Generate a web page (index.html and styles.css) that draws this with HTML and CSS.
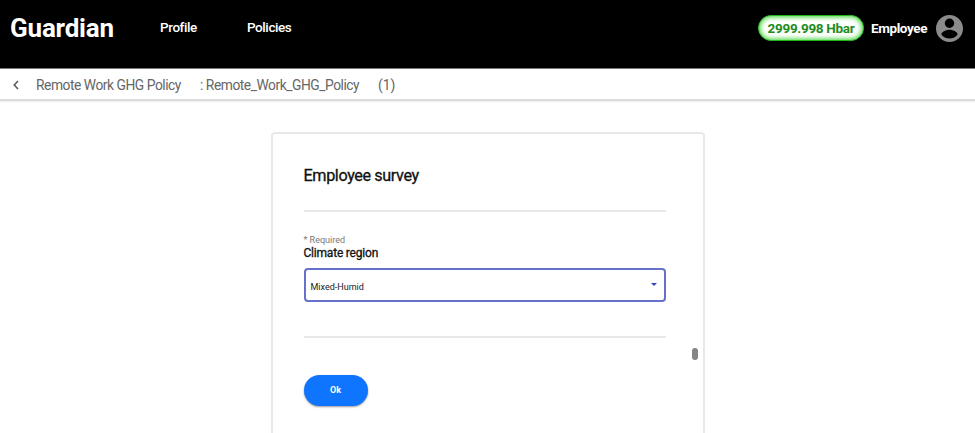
FILE: index.html
```html
<!DOCTYPE html>
<html lang="en">
<head>
<meta charset="utf-8">
<title>Guardian</title>
<link rel="stylesheet" href="styles.css">
</head>
<body>
<header class="topbar">
  <div class="brand"><span>Guardian</span></div>
  <nav class="nav"><a class="profile">Profile</a><a class="policies">Policies</a></nav>
  <div class="account">
    <span class="balance"><span>2999.998 Hbar</span></span>
    <span class="role">Employee</span>
    <svg class="avatar" viewBox="2 2 20 20"><path fill="#8b8b8b" d="M12 2a10 10 0 1 0 0 20 10 10 0 0 0 0-20zm0 2.600a3.500 3.500 0 1 1 0 7 3.500 3.500 0 0 1 0-7zm0 14.800c-2.500 0-4.700-1.100-6-3 0-2 4-3.400 6-3.400s6 1.400 6 3.400c-1.300 1.900-3.500 3-6 3z"/></svg>
  </div>
</header>
<div class="crumbs">
  <svg class="back" viewBox="0 0 6 10"><path d="M5 1 1.200 5 5 9" fill="none" stroke="#555" stroke-width="1.500"/></svg>
  <span class="policy">Remote Work GHG Policy</span>
  <span class="tag">: Remote_Work_GHG_Policy</span>
  <span class="version">(1)</span>
</div>
<main class="page">
  <section class="card">
    <h1 class="title"><span>Employee survey</span></h1>
    <div class="field">
      <div class="required"><span>* Required</span></div>
      <label class="label"><span>Climate region</span></label>
      <div class="select"><span class="value">Mixed-Humid</span><svg class="caret" viewBox="0 0 6 3"><path d="M0 0h6L3 3z" fill="#3446b8"/></svg></div>
    </div>
    <div class="actions"><button class="ok">Ok</button></div>
    <div class="thumb"></div>
  </section>
</main>
</body>
</html>
```
FILE: styles.css
```css
* { box-sizing: border-box; }
html, body { height: 100%; }
body { margin: 0; display: flex; flex-direction: column; overflow: hidden; background: #fff; color: #111; font-family: Roboto, sans-serif; white-space: nowrap; }
.topbar { height: 68px; flex: none; display: flex; align-items: flex-start; background: #000; color: #fff; padding: 12px 12px 0 10px; }
.brand { width: 150px; font-size: 26px; font-weight: 700; line-height: 32px; letter-spacing: -0.2px; }
.nav { display: flex; font-size: 13.5px; font-weight: 500; line-height: 31px; letter-spacing: -0.42px; }
.profile { width: 87px; }
.account { margin-left: auto; display: flex; align-items: center; height: 32px; }
.balance { width: 106px; height: 26px; border: 1px solid #22b61a; border-radius: 13px; background: #fff; color: #218c1d; box-shadow: inset 0 0 5px 1px #36d32c; font-size: 13.5px; font-weight: 700; line-height: 24px; letter-spacing: -0.3px; text-align: center; }
.role { width: 65px; margin-left: 7px; font-size: 13.5px; font-weight: 700; letter-spacing: -0.4px; }
.avatar { width: 27px; height: 27px; }
.crumbs { height: 33px; flex: none; display: flex; align-items: center; padding: 2px 0 0 13px; border-top: 1px solid #777; border-bottom: 2px solid #dcdcdc; box-shadow: 0 1px 1px #eee; color: #666; font-size: 13.8px; line-height: 28px; letter-spacing: -0.46px; }
.back { width: 6px; height: 10px; margin-right: 17px; }
.policy { width: 164px; }
.tag { width: 178px; }
.version { letter-spacing: 0; }
.page { flex: 1; display: flex; justify-content: center; padding-top: 31px; min-height: 0; }
.card { position: relative; width: 434px; height: 320px; flex: none; border: 2px solid #e8e8e8; border-radius: 4px; padding: 30px 37px 0 31px; }
.title { margin: 0; height: 48px; border-bottom: 2px solid #e8e8e8; font-size: 16.2px; font-weight: 400; line-height: 24px; letter-spacing: -0.38px; -webkit-text-stroke: 0.3px #111; }
.field { height: 126px; padding-top: 22px; border-bottom: 2px solid #e8e8e8; }
.required { height: 11px; font-size: 9px; line-height: 12px; color: #777; }
.label { display: block; height: 23px; font-size: 12px; font-weight: 400; line-height: 16px; letter-spacing: -0.2px; -webkit-text-stroke: 0.3px #111; }
.select { display: flex; align-items: center; justify-content: space-between; height: 34px; border: 2px solid #6671cb; border-radius: 4px; padding: 0 7px 0 5px; }
.value { font-size: 9px; line-height: 12px; padding-top: 4px; color: #222; }
.caret { width: 6px; height: 3px; margin-bottom: 2px; }
.actions { padding-top: 37px; }
.ok { display: block; width: 64px; height: 31px; padding: 0; border: 0; border-radius: 16px; background: #0f75ff; color: #fff; font: 700 9px/31px Roboto, sans-serif; box-shadow: 0 1px 2px #0006; }
.thumb { position: absolute; right: 5px; top: 214px; width: 6px; height: 12px; border-radius: 3px; background: #858585; }
```
